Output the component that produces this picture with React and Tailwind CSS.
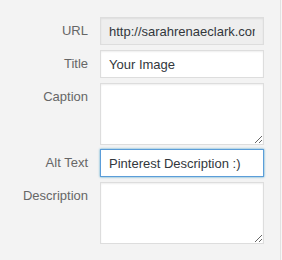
import React from 'react';

// attachment details fields, like the wp media modal sidebar
const FIELDS = [
    { label: 'URL', value: 'http://sarahrenaeclark.com/wp-content/uploads/your-image.jpg', kind: 'readonly' },
    { label: 'Title', value: 'Your Image', kind: 'input' },
    { label: 'Caption', value: '', kind: 'textarea' },
    { label: 'Alt Text', value: 'Pinterest Description :)', kind: 'focus' },
    { label: 'Description', value: '', kind: 'textarea' },
];

const font = { fontFamily: '"Liberation Sans", Arial, sans-serif' };

function Field({ f, last }){
    const base = 'block w-[164px] border px-2 text-[13px] text-[#32373c] outline-none';
    let control;
    if(f.kind === 'textarea'){
        control = <textarea readOnly value={f.value} className={base + ' h-[62px] py-1 bg-white border-[#dddddd] shadow-[inset_0_1px_2px_rgba(0,0,0,0.07)] resize-y'} style={font} />;
    } else if(f.kind === 'readonly'){
        control = <input readOnly value={f.value} className={base + ' h-[28px] bg-[#eeeeee] border-[#dddddd] shadow-[inset_0_1px_2px_rgba(0,0,0,0.07)]'} style={font} />;
    } else if(f.kind === 'focus'){
        control = <input readOnly value={f.value} className={base + ' h-[28px] bg-white border-[#5b9dd9] shadow-[0_0_2px_rgba(30,140,190,0.8)]'} style={font} />;
    } else {
        control = <input readOnly value={f.value} className={base + ' h-[28px] bg-white border-[#dddddd] shadow-[inset_0_1px_2px_rgba(0,0,0,0.07)]'} style={font} />;
    }
    return (
        <div className={'flex items-start ' + (last ? '' : 'mb-[5px]')}>
            <label className="w-[88px] h-[28px] leading-[28px] text-right text-[13px] text-[#666666] pr-0">{f.label}</label>
            <div className="ml-[12px]">{control}</div>
        </div>
    );
}

export default function App(){
    return (
        <div className="w-[282px] h-[260px] bg-[#f3f3f3] flex" style={font}>
            <div className="w-[280px] pt-[17px]">
                {FIELDS.map((f, i) => (
                    <div key={f.label} className={i === 2 ? '-mb-px' : ''}>
                        <Field f={f} last={i === FIELDS.length - 1} />
                    </div>
                ))}
            </div>
            <div className="w-px h-full bg-[#e2e2e2]"></div>
            <div className="w-px h-full bg-[#f7f7f7]"></div>
        </div>
    );
}
